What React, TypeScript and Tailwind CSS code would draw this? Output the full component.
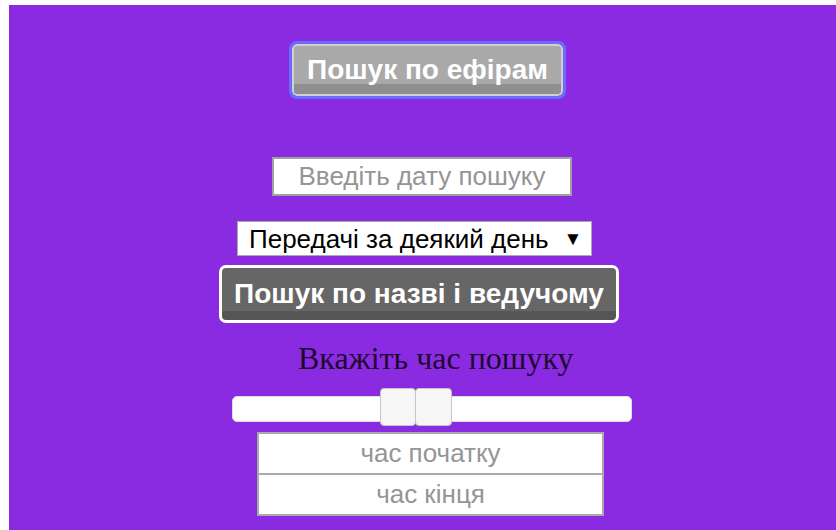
const sans = "font-['Liberation_Sans',Arial,sans-serif]";

/* Two-handle time range bar, drawn like a jQuery UI slider */
function TimeRange() {
  return (
    <div className="relative ml-[223px] mt-[20px] h-[26px] w-[400px] rounded-[5px] border border-[#dddddd] bg-white">
      <span className="absolute left-[147px] top-[-9px] h-[38px] w-[36px] rounded-[4px] border border-[#c5c5c5] bg-[#f6f6f6]" />
      <span className="absolute left-[182px] top-[-9px] h-[38px] w-[37px] rounded-[4px] border border-[#c5c5c5] bg-[#f6f6f6]" />
    </div>
  );
}

export default function App() {
  return (
    <div className="min-h-[530px] bg-white pl-[9px] pt-[5px]">
      <div className="flex min-h-[525px] flex-col items-start bg-[#8a2be2] pb-[14px]">
        <button
          className={`${sans} ml-[283px] mt-[39px] h-[52px] w-[271px] rounded-[5px] border-2 border-[#d0d0d0] bg-[linear-gradient(#a9a9a9_0,#a9a9a9_78%,#8f8f8f_80%,#8f8f8f_100%)] text-[28px] font-bold leading-none text-white outline outline-[3px] outline-[#6b6bff]`}
        >
          Пошук по ефірам
        </button>

        <input
          placeholder="Введіть дату пошуку"
          className={`${sans} ml-[263px] mt-[61px] h-[39px] w-[300px] border-2 border-[#a0a0a0] bg-white text-center text-[26px] text-[#777] placeholder:text-[#959595]`}
        />

        <div
          className={`${sans} ml-[228px] mt-[25px] flex h-[35px] w-[355px] items-center border border-[#a9a9a9] bg-white pl-[11px] text-[26px] leading-none text-black`}
        >
          <span>Передачі за деякий день</span>
          <span className="ml-[15px] text-[19px] leading-none">▼</span>
        </div>

        <button
          className={`${sans} ml-[210px] mt-[9px] h-[58px] w-[400px] rounded-[7px] border-[3px] border-white bg-[linear-gradient(#666666_0,#666666_82%,#555555_84%,#555555_100%)] text-[28px] font-bold leading-none text-white`}
        >
          Пошук по назві і ведучому
        </button>

        <p className="ml-[289px] mt-[17px] font-['Liberation_Serif','Times_New_Roman',serif] text-[32px] leading-[36px] text-[#1e0830]">
          Вкажіть час пошуку
        </p>

        <TimeRange />

        <input
          placeholder="час початку"
          className={`${sans} ml-[248px] mt-[10px] h-[43px] w-[347px] border-2 border-[#aaaaaa] bg-white text-center text-[26px] placeholder:text-[#959595]`}
        />
        <input
          placeholder="час кінця"
          className={`${sans} ml-[248px] h-[41px] w-[347px] border-2 border-t-0 border-[#aaaaaa] bg-white text-center text-[26px] placeholder:text-[#959595]`}
        />
      </div>
    </div>
  );
}
